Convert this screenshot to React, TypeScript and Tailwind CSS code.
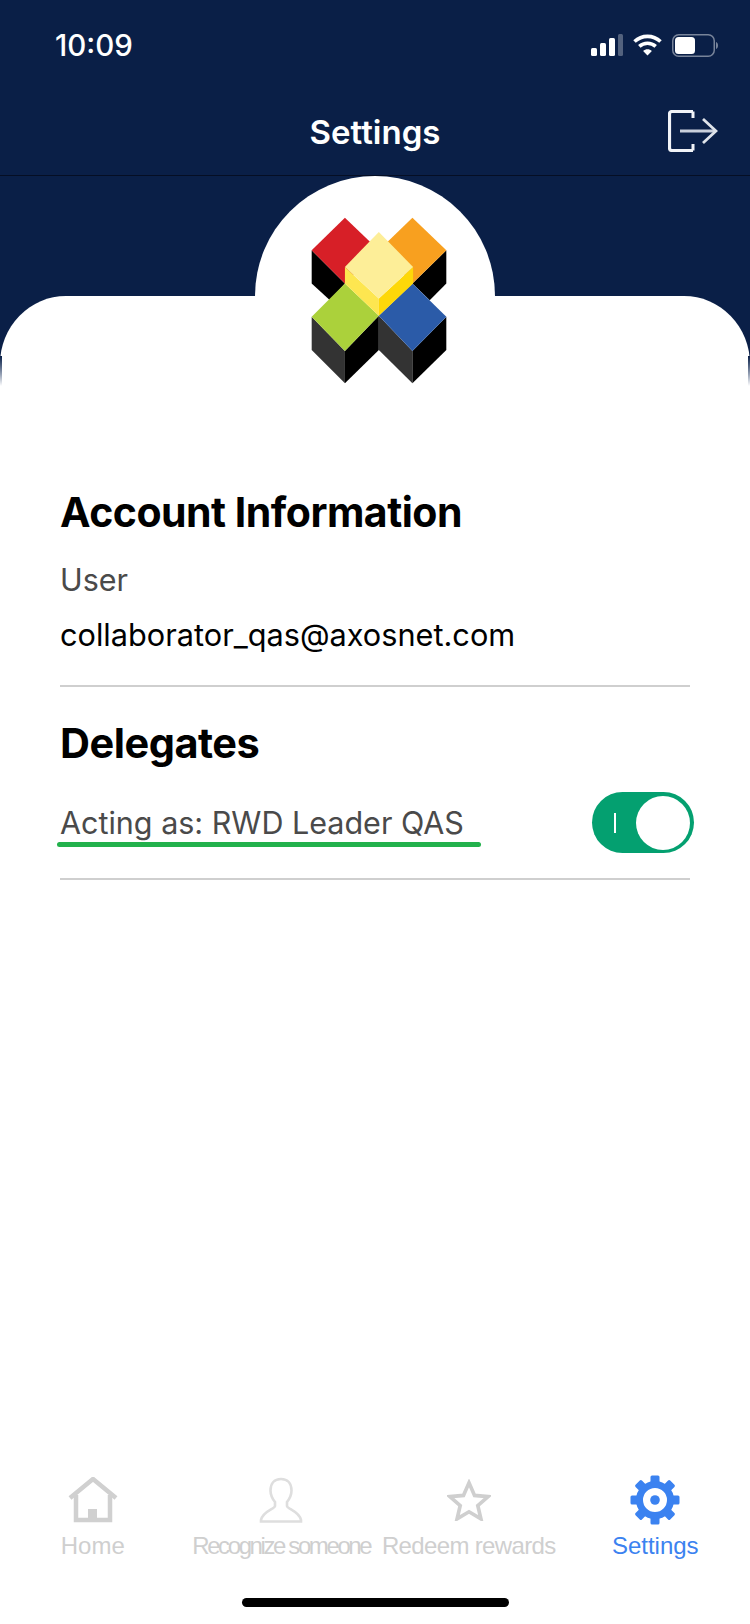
const NAVY = 'bg-[#0a1f47]';

const SignalIcon = () => (
  <svg width="32" height="22" viewBox="0 0 32 22">
    <rect x="0" y="14" width="6" height="8" rx="1.5" fill="#fff" />
    <rect x="9" y="9" width="6" height="13" rx="1.5" fill="#fff" />
    <rect x="18" y="4" width="6" height="18" rx="1.5" fill="#fff" />
    <rect x="27" y="0" width="5" height="22" rx="1.5" fill="#fff" fillOpacity="0.3" />
  </svg>
);

const WifiIcon = () => (
  <svg width="29" height="22" viewBox="0 0 29 22" fill="none" stroke="#fff" strokeWidth="3.6">
    <path d="M1.5 7.5C8.8 .6 20.2 .6 27.5 7.5" />
    <path d="M6.3 12.4c4.6-4.2 11.8-4.2 16.4 0" />
    <path d="M14.5 21.5l-4.4-4.6c2.5-2.1 6.3-2.1 8.8 0z" fill="#fff" stroke="none" />
  </svg>
);

const BatteryIcon = () => (
  <svg width="46" height="23" viewBox="0 0 46 23">
    <rect x="0.75" y="0.75" width="41.5" height="21.5" rx="6" fill="none" stroke="#fff" strokeOpacity="0.45" strokeWidth="1.5" />
    <rect x="3" y="3" width="20" height="17" rx="3.5" fill="#fff" />
    <path d="M44 8c1.3.5 2 1.8 2 3.500s-.7 3-2 3.500z" fill="#fff" fillOpacity="0.45" />
  </svg>
);

const LogoutIcon = () => (
  <svg width="50" height="42" viewBox="0 0 50 42" fill="none" stroke="#f1f3f7" className="blur-[0.5px]">
    <path d="M25 1.500H4Q1.500 1.500 1.500 4V38Q1.500 40.500 4 40.500H25" strokeWidth="3.200" />
    <path d="M25 1.500V8M25 34V40.500" strokeWidth="3" />
    <path d="M12 21H47" strokeWidth="2.800" stroke="#c9cfdb" />
    <path d="M35 9L48 21L35 33" strokeWidth="2.800" stroke="#dfe3ea" />
  </svg>
);

// coordinates are in the 3x crop space of the logo
const Logo = () => (
  <svg width="136" height="167" viewBox="243 140 409 502" className="blur-[0.5px]">
    <polygon points="245,240 345,340 300,390 245,340" fill="#000" />
    <polygon points="650,240 548,340 600,390 650,340" fill="#000" />
    <polygon points="345,142 447,240 345,340 245,240" fill="#d71f27" />
    <polygon points="548,142 650,240 548,340 447,240" fill="#f8a01f" />
    <polygon points="245,440 345,543 345,640 245,540" fill="#333" />
    <polygon points="345,543 447,437 447,540 345,640" fill="#000" />
    <polygon points="447,437 548,543 548,640 447,540" fill="#333" />
    <polygon points="548,543 650,440 650,540 548,640" fill="#000" />
    <polygon points="345,340 447,437 345,543 245,440" fill="#abd13b" />
    <polygon points="548,340 650,440 548,543 447,437" fill="#2b5ba8" />
    <polygon points="345,290 447,385 447,437 345,340" fill="#fde650" />
    <polygon points="550,290 447,385 447,437 550,340" fill="#fed809" />
    <polygon points="447,185 550,290 447,385 345,290" fill="#fdee98" />
  </svg>
);

const HomeIcon = () => (
  <svg width="50" height="46" viewBox="0 0 50 46" fill="none" stroke="#d0d0d0" className="blur-[0.7px] -translate-x-[1px]">
    <path d="M2 21L25 2L48 21" strokeWidth="4.500" />
    <path d="M8 18V43H42V18" strokeWidth="4.500" />
    <rect x="20" y="32" width="9" height="12" fill="#d0d0d0" stroke="none" />
  </svg>
);

const PersonIcon = () => (
  <svg width="44" height="46" viewBox="0 0 44 46" fill="none" stroke="#dedede" strokeWidth="2.600" className="blur-[0.5px]">
    <path d="M22 2c-7 0-10.500 5-10.500 11.500 0 5 2.500 9 4.500 11.500v4c0 3-12 5-14 14v1.500h40V43c-2-9-14-11-14-14v-4c2-2.500 4.500-6.500 4.500-11.500C32.500 7 29 2 22 2z" />
  </svg>
);

const StarIcon = () => (
  <svg width="44" height="42" viewBox="0 0 46 44" fill="none" stroke="#cfcfcf" strokeWidth="3.800" className="blur-[0.7px]">
    <path d="M23 4l5.800 13.200 14.200 1.300-10.800 9.300 3.300 14L23 34.300 10.500 41.800l3.300-14L3 18.500l14.200-1.300z" />
  </svg>
);

const GearIcon = () => (
  <svg width="50" height="50" viewBox="0 0 50 50" className="blur-[0.4px] -translate-x-[1px]">
    {[0, 45, 90, 135, 180, 225, 270, 315].map((deg) => (
      <rect key={deg} x="20.500" y="0.500" width="9" height="12" rx="1.500" fill="#3b82f0" transform={`rotate(${deg} 25 25)`} />
    ))}
    <circle cx="25" cy="25" r="15.500" fill="none" stroke="#3b82f0" strokeWidth="7" />
    <circle cx="25" cy="25" r="4.800" fill="#3b82f0" />
  </svg>
);

const tabs = [
  { label: 'Home', icon: <HomeIcon />, labelClass: 'text-[#cfcfcf] -translate-x-[1px]' },
  { label: 'Recognize someone', icon: <PersonIcon />, labelClass: 'text-[#cfcfcf] tracking-[-2.400px]' },
  { label: 'Redeem rewards', icon: <StarIcon />, labelClass: 'text-[#cfcfcf] tracking-[-0.650px]' },
  { label: 'Settings', icon: <GearIcon />, labelClass: 'text-[#3b82f0] -translate-x-[1px]' },
];

export default function App() {
  return (
    <div className="w-[750px] h-[1624px] flex flex-col bg-white overflow-hidden font-['Inter',sans-serif]">
      <header className={NAVY}>
        {/* Status bar */}
        <div className="h-[88px] flex items-center justify-between pl-[55px] pr-[32px] pt-[2px]">
          <span className="text-white text-[29.500px] font-medium leading-none pt-[2px]">10:09</span>
          <div className="flex items-center gap-[10px]">
            <SignalIcon />
            <WifiIcon />
            <BatteryIcon />
          </div>
        </div>
        {/* Nav bar */}
        <div className="relative h-[88px] flex items-center justify-center border-b border-[#050e24]">
          <h1 className="text-white text-[33px] font-semibold leading-none pt-[1px]">Settings</h1>
          <button className="absolute right-[32px] top-[22px]">
            <LogoutIcon />
          </button>
        </div>
      </header>

      {/* Logo bump over the white sheet */}
      <div className={`relative h-[210px] shrink-0 flex flex-col justify-end ${NAVY}`}>
        <div className="h-[90px] bg-white rounded-tl-[66px_68px] rounded-tr-[66px_68px]" />
        <div className="absolute left-[255px] top-0 w-[240px] h-[240px] rounded-full bg-white flex items-start justify-center pt-[41px] pl-[8px]">
          <Logo />
        </div>
        {/* thin fading edge where the sheet meets the screen border */}
        <div className="absolute left-0 bottom-0 w-[2px] h-[30px] bg-gradient-to-b from-[#0a1f47] to-white" />
        <div className="absolute right-0 bottom-0 w-[2px] h-[30px] bg-gradient-to-b from-[#0a1f47] to-white" />
      </div>

      <main className="px-[60px] pt-[102px]">
        <h2 className="text-[41px] font-bold leading-[48px] text-black tracking-[-0.500px]">Account Information</h2>
        <p className="mt-[26px] text-[30.500px] leading-[36px] text-[#4a4a4a]">User</p>
        <p className="mt-[19px] text-[30.700px] leading-[36px] text-black">collaborator_qas@axosnet.com</p>
        <div className="mt-[32px] h-[2px] bg-[#cfcfcf]" />
        <h2 className="mt-[32px] text-[41.500px] font-bold leading-[48px] text-black tracking-[-0.500px]">Delegates</h2>
        <div className="mt-[37px] flex items-center justify-between">
          <div className="relative">
            <p className="text-[30.500px] leading-[36px] text-[#4a4a4a]">Acting as: RWD Leader QAS</p>
            <div className="absolute left-[-3px] top-[37px] w-[424px] h-[5px] rounded-full bg-[#22b14c]" />
          </div>
          <div className="w-[102px] h-[61px] -mr-[4px] -my-[12px] rounded-full bg-[#04a070] flex items-center justify-between pl-[22px] pr-[4px]">
            <div className="w-[2px] h-[20px] bg-white" />
            <div className="w-[54px] h-[54px] rounded-full bg-white" />
          </div>
        </div>
        <div className="mt-[37px] h-[2px] bg-[#cfcfcf]" />
      </main>

      {/* Tab bar */}
      <nav className="mt-auto grid grid-cols-4 font-['Liberation_Sans',sans-serif]">
        {tabs.map((tab) => (
          <div key={tab.label} className="flex flex-col items-center">
            <div className="h-[50px] flex items-center justify-center">{tab.icon}</div>
            <span className={`mt-[5px] text-[24px] leading-[32px] whitespace-nowrap ${tab.labelClass}`}>{tab.label}</span>
          </div>
        ))}
      </nav>
      <div className="h-[62px] shrink-0 flex justify-center pt-[36px]">
        <div className="w-[267px] h-[9px] rounded-full bg-black" />
      </div>
    </div>
  );
}
